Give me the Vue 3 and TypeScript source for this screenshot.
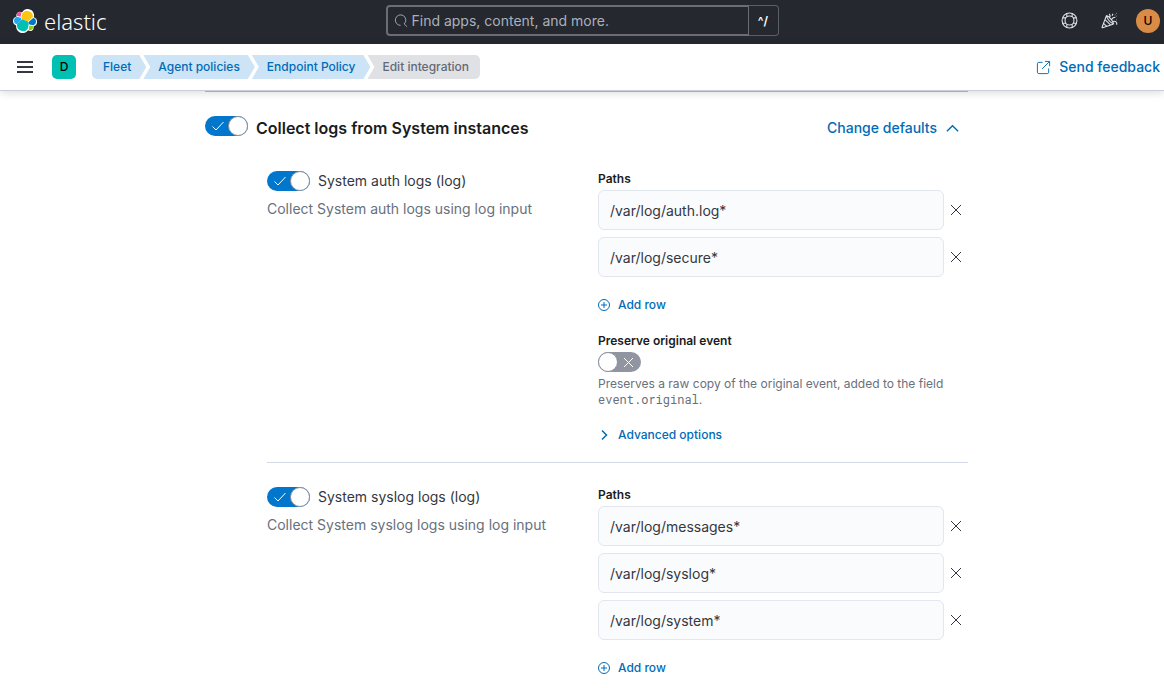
<script setup lang="ts">
import { ref } from 'vue'

interface Stream {
  id: string
  title: string
  description: string
  enabled: boolean
  paths: string[]
  preserve?: boolean
}

const crumbs = ['Fleet', 'Agent policies', 'Endpoint Policy', 'Edit integration']
const query = ref('')
const collectLogs = ref(true)

const streams = ref<Stream[]>([
  {
    id: 'auth',
    title: 'System auth logs (log)',
    description: 'Collect System auth logs using log input',
    enabled: true,
    paths: ['/var/log/auth.log*', '/var/log/secure*'],
    preserve: false,
  },
  {
    id: 'syslog',
    title: 'System syslog logs (log)',
    description: 'Collect System syslog logs using log input',
    enabled: true,
    paths: ['/var/log/messages*', '/var/log/syslog*', '/var/log/system*'],
  },
])

function removePath(stream: Stream, index: number) {
  stream.paths.splice(index, 1)
}

function addPath(stream: Stream) {
  stream.paths.push('')
}
</script>

<template>
  <div class="app">
    <header class="topbar">
      <a class="brand" href="#" aria-label="Elastic home">
        <svg class="brand-mark" viewBox="0 0 32 32" aria-hidden="true">
          <path fill="#fff" d="M32 16.77a6.334 6.334 0 0 0-1.14-3.63 6.269 6.269 0 0 0-3.04-2.26 9.117 9.117 0 0 0-.15-4.99 9.06 9.06 0 0 0-2.92-4.06A8.964 8.964 0 0 0 15.37 1.06 8.978 8.978 0 0 0 11.98 4.64 4.782 4.782 0 0 0 6.4 4.54a4.832 4.832 0 0 0-1.63 5.34A6.38 6.38 0 0 0 0 15.92a6.352 6.352 0 0 0 4.19 5.98 9.037 9.037 0 0 0 12.44 9.46 8.974 8.974 0 0 0 3.44-2.97 4.768 4.768 0 0 0 5.57.11 4.823 4.823 0 0 0 1.65-5.3A6.38 6.38 0 0 0 32 16.77Z" />
          <path fill="#FEC514" d="m12.58 13.79 7 3.21 7.06-6.21a7.85 7.85 0 0 0-14.4-4.72l-1.18 6.12 1.52 1.6Z" />
          <path fill="#00BFB3" d="M5.33 21.22a7.91 7.91 0 0 0 14.53 4.66l1.17-6.09-1.56-3-7.03-3.21-7.11 6.2v1.44Z" />
          <path fill="#F04E98" d="m5.29 9.1 4.8 1.14L11.14 4.77A3.79 3.79 0 0 0 5.29 9.1Z" />
          <path fill="#1BA9F5" d="M4.87 10.24a5.36 5.36 0 0 0-.13 10.1l6.73-6.1-1.24-2.65-5.36-1.35Z" />
          <path fill="#93C90E" d="M20.87 27.39a3.78 3.78 0 0 0 5.84-4.32l-4.8-1.13-1.04 5.45Z" />
          <path fill="#07C" d="m21.85 20.56 5.28 1.24a5.36 5.36 0 0 0 .13-10.1l-6.91 6.07 1.5 2.79Z" />
        </svg>
        <span class="brand-name">elastic</span>
      </a>

      <form class="search" role="search" @submit.prevent>
        <div class="search-box">
          <svg class="search-icon" viewBox="0 0 16 16" aria-hidden="true">
            <path d="M7.500 13A6 6 0 1 1 11.700 11.300M11.300 10.900l3.700 3.700" />
          </svg>
          <input v-model="query" type="text" aria-label="Find apps, content, and more" placeholder="Find apps, content, and more." />
        </div>
        <span class="shortcut">^/</span>
      </form>

      <div class="tools">
        <button class="tool" type="button" aria-label="Help">
          <svg class="help-icon" viewBox="0 0 16 16" aria-hidden="true">
            <circle cx="8" cy="8" r="7" />
            <circle cx="8" cy="8" r="4.200" />
            <path d="M5.500 1.500v3.200M10.500 1.500v3.200M5.500 11.300v3.200M10.500 11.300v3.200M1.500 5.500h3.200M1.500 10.500h3.200M11.300 5.500h3.200M11.300 10.500h3.200" />
          </svg>
        </button>
        <button class="tool" type="button" aria-label="What's new">
          <svg viewBox="0 0 16 16" aria-hidden="true">
            <path d="M5.200 3.200 1 14.300c-.1.400.1.600.5.500l10.500-3.600M5.200 3.200c.3 2.700 3 6.900 6.800 8M5.200 3.200c2.500 1 6.300 5.500 6.800 8M3.800 7.200l5.100 5M2.400 10.800l3 2.700M8 5.200c1-1.200.8-2.200-.3-3.500M10 7c.8-1.500 2-2 3.500-2M11.200 9c1.400-.6 2.900-.2 3.600 1.300v1.700M10.500 3.500l.7-1.800M13 2.600l.4.100M14.600 1.200l.4.100M14.700 3.800l.4.100M14.300 7.200l.4.100" />
          </svg>
        </button>
        <button class="avatar" type="button" aria-label="Account menu">U</button>
      </div>
    </header>

    <div class="subbar">
      <button class="menu" type="button" aria-label="Toggle primary navigation">
        <svg viewBox="0 0 16 12" aria-hidden="true">
          <path d="M0 1h16M0 6h16M0 11h16" />
        </svg>
      </button>
      <button class="space" type="button" aria-label="Default space">D</button>
      <nav class="crumbs" aria-label="Breadcrumbs">
        <template v-for="(crumb, i) in crumbs" :key="crumb">
          <a v-if="i < crumbs.length - 1" class="crumb" href="#">{{ crumb }}</a>
          <span v-else class="crumb current" aria-current="page">{{ crumb }}</span>
        </template>
      </nav>
      <a class="feedback" href="#">
        <svg viewBox="0 0 16 16" aria-hidden="true">
          <path d="M7 2.500H3A1.500 1.500 0 0 0 1.500 4v9A1.500 1.500 0 0 0 3 14.500h9a1.500 1.500 0 0 0 1.500-1.500V9M9.500 1.500h5v5M14.300 1.700 6.500 9.500" />
        </svg>
        Send feedback
      </a>
    </div>

    <main class="content">
      <section class="panel">
        <div class="panel-head">
          <label class="switch-row">
            <span class="switch">
              <input v-model="collectLogs" type="checkbox" role="switch" />
              <svg viewBox="0 0 43 20" aria-hidden="true">
                <rect class="track" width="43" height="20" rx="10" />
                <path class="mark tick" d="m7.500 10.500 3.500 3.500 7.500-8" />
                <path class="mark cross" d="m26 6 9 9m0-9-9 9" />
                <circle class="thumb" cx="10" cy="10" r="9.500" />
              </svg>
            </span>
            <h2>Collect logs from System instances</h2>
          </label>
          <button class="link defaults" type="button">
            Change defaults
            <svg viewBox="0 0 16 16" aria-hidden="true"><path d="m2 11 6-6 6 6" /></svg>
          </button>
        </div>

        <div v-for="stream in streams" :key="stream.id" class="stream">
          <div class="summary">
            <label class="switch-row">
              <span class="switch">
                <input v-model="stream.enabled" type="checkbox" role="switch" />
                <svg viewBox="0 0 43 20" aria-hidden="true">
                  <rect class="track" width="43" height="20" rx="10" />
                  <path class="mark tick" d="m7.500 10.500 3.500 3.500 7.500-8" />
                  <path class="mark cross" d="m26 6 9 9m0-9-9 9" />
                  <circle class="thumb" cx="10" cy="10" r="9.500" />
                </svg>
              </span>
              <span>{{ stream.title }}</span>
            </label>
            <p class="description">{{ stream.description }}</p>
          </div>

          <div class="fields">
            <label class="field-label" :for="`${stream.id}-path-0`">Paths</label>
            <div class="paths">
              <div v-for="(_, i) in stream.paths" :key="i" class="path">
                <input :id="`${stream.id}-path-${i}`" v-model="stream.paths[i]" type="text" :aria-label="`Path ${i + 1}`" />
                <button type="button" aria-label="Remove row" @click="removePath(stream, i)">
                  <svg viewBox="0 0 12 12" aria-hidden="true"><path d="m1 1 10 10m0-10L1 11" /></svg>
                </button>
              </div>
            </div>
            <button class="link small" type="button" @click="addPath(stream)">
              <svg viewBox="0 0 12 12" aria-hidden="true">
                <circle cx="6" cy="6" r="5.500" />
                <path d="M6 3v6M3 6h6" />
              </svg>
              Add row
            </button>

            <template v-if="stream.preserve !== undefined">
              <label class="field-label preserve" :for="`${stream.id}-preserve`">Preserve original event</label>
              <span class="switch">
                <input :id="`${stream.id}-preserve`" v-model="stream.preserve" type="checkbox" role="switch" />
                <svg viewBox="0 0 43 20" aria-hidden="true">
                  <rect class="track" width="43" height="20" rx="10" />
                  <path class="mark tick" d="m7.500 10.500 3.500 3.500 7.500-8" />
                  <path class="mark cross" d="m26 6 9 9m0-9-9 9" />
                  <circle class="thumb" cx="10" cy="10" r="9.500" />
                </svg>
              </span>
              <p class="help">
                Preserves a raw copy of the original event, added to the field
                <code>event.original</code>.
              </p>
              <button class="link small advanced" type="button">
                <svg viewBox="0 0 12 12" aria-hidden="true"><path d="m4 1.500 4.500 4.500L4 10.500" /></svg>
                Advanced options
              </button>
            </template>
          </div>
        </div>
      </section>
    </main>
  </div>
</template>

<style>
html,
body {
  height: 100%;
  overflow: hidden;
}

#app {
  height: 100%;
}
</style>

<style scoped>
.app {
  height: 100%;
  display: flex;
  flex-direction: column;
  background: #fff;
  color: #343741;
  font-family: Inter, "Liberation Sans", sans-serif;
  font-size: 14px;
  line-height: 20px;
}

button,
input {
  font: inherit;
  color: inherit;
}

button {
  margin: 0;
  padding: 0;
  border: 0;
  background: none;
  cursor: pointer;
}

a {
  color: #006bb8;
  text-decoration: none;
}

svg {
  display: block;
  flex: none;
  fill: none;
  stroke: currentColor;
}

h2,
p {
  margin: 0;
}

.topbar {
  flex: none;
  height: 44px;
  display: grid;
  grid-template-columns: 1fr 393px 1fr;
  align-items: center;
  box-sizing: border-box;
  padding: 0 4px 3px;
  background: #25282f;
  color: #dfe5ef;
}

.brand {
  display: flex;
  align-items: center;
  gap: 7px;
  padding-left: 9px;
  color: #fff;
}

.brand-mark {
  width: 24px;
  height: 24px;
  stroke: none;
}

.brand-name {
  font-family: "Noto Sans", "Open Sans", sans-serif;
  font-size: 22px;
  font-weight: 300;
  line-height: 24px;
}

.search {
  display: flex;
  height: 31px;
  box-sizing: border-box;
  color: #abb4c4;
}

.search-box {
  flex: 1;
  display: flex;
  align-items: center;
  gap: 4px;
  padding: 0 6px;
  border: 2px solid #6a6d75;
  border-right-width: 1px;
  border-radius: 4px 0 0 4px;
}

.search-icon {
  width: 14px;
  height: 14px;
}

.search input {
  flex: 1;
  min-width: 0;
  padding: 0;
  border: 0;
  outline: 0;
  background: none;
}

.search input::placeholder {
  color: #abb0ba;
  opacity: 1;
}

.shortcut {
  width: 29px;
  display: grid;
  place-items: center;
  border: 1px solid #5b5e66;
  border-left: 0;
  border-radius: 0 4px 4px 0;
  color: #fff;
  font-size: 12px;
  font-weight: 600;
}

.tools {
  display: flex;
  align-items: center;
  justify-content: flex-end;
  gap: 23px;
}

.tool svg {
  width: 17px;
  height: 17px;
}

.avatar {
  width: 24px;
  height: 24px;
  border-radius: 50%;
  background: #da8b45;
  color: #000;
  font-size: 12px;
  font-weight: 500;
}

.tools .avatar {
  margin-left: -5px;
}

.subbar {
  flex: none;
  position: relative;
  z-index: 1;
  display: flex;
  align-items: center;
  height: 46px;
  padding: 0 4px 0 17px;
  border-bottom: 1px solid #c9cede;
  background: #fff;
  box-shadow: 0 2px 8px rgba(0, 0, 0, 0.14);
}

.menu svg {
  width: 16px;
  height: 12px;
  stroke-width: 2;
}

.space {
  width: 24px;
  height: 24px;
  margin: 0 16px 0 19px;
  border-radius: 5px;
  background: #00bfb3;
  color: #000;
  font-size: 12px;
  font-weight: 500;
}

.crumbs {
  display: flex;
  font-size: 12px;
  font-weight: 500;
  line-height: 24px;
}

.crumb {
  margin-left: -3px;
  padding: 0 15px;
  background: #cce4f5;
  clip-path: polygon(0 0, calc(100% - 7px) 0, 100% 50%, calc(100% - 7px) 100%, 0 100%, 7px 50%);
}

.crumb:first-child {
  margin-left: 0;
  padding-left: 11px;
  border-radius: 5px 0 0 5px;
  clip-path: polygon(0 0, calc(100% - 7px) 0, 100% 50%, calc(100% - 7px) 100%, 0 100%);
}

.crumb.current {
  padding-right: 11px;
  border-radius: 0 5px 5px 0;
  background: #e0e1e4;
  color: #646a77;
  clip-path: polygon(0 0, 100% 0, 100% 100%, 0 100%, 7px 50%);
}

.feedback {
  display: flex;
  align-items: center;
  gap: 8px;
  margin-left: auto;
  font-weight: 500;
}

.feedback svg {
  width: 15px;
  height: 15px;
}

.content {
  flex: 1;
  min-height: 0;
  overflow: hidden;
  padding-left: 9px;
}

.panel {
  max-width: 763px;
  margin: 0 auto;
  border-top: 1px solid #b7bfcf;
}

.panel-head {
  display: flex;
  align-items: center;
  justify-content: space-between;
  padding: 24px 8px 31px 0;
}

.switch-row {
  display: flex;
  align-items: center;
  gap: 8px;
}

.panel-head .switch-row {
  align-items: flex-start;
}

h2 {
  color: #1a1c21;
  font-size: 16px;
  font-weight: 600;
  line-height: 24px;
}

.switch {
  position: relative;
  display: block;
  flex: none;
  width: 43px;
  height: 20px;
}

.switch input {
  position: absolute;
  inset: 0;
  width: 100%;
  height: 100%;
  margin: 0;
  opacity: 0;
  cursor: pointer;
}

.switch svg {
  width: 43px;
  height: 20px;
}

.track {
  fill: #9195a1;
  stroke: none;
}

.mark {
  stroke: #fff;
}

.tick {
  display: none;
}

.thumb {
  fill: #fff;
  stroke: #8c919c;
}

.switch input:checked + svg .track {
  fill: #0077cc;
}

.switch input:checked + svg .tick {
  display: inline;
}

.switch input:checked + svg .cross {
  display: none;
}

.switch input:checked + svg .thumb {
  transform: translateX(23px);
}

.link {
  display: flex;
  align-items: center;
  gap: 8px;
  color: #006bb8;
  font-weight: 500;
}

.link svg {
  width: 15px;
  height: 15px;
  stroke-width: 1.5;
}

.link.small {
  font-size: 12px;
  line-height: 16px;
}

.link.small svg {
  width: 12px;
  height: 12px;
  stroke-width: 1;
}

.link.advanced svg {
  stroke-width: 1.5;
}

.stream {
  display: grid;
  grid-template-columns: 331fr 370fr;
  margin-left: 62px;
  padding-bottom: 19px;
}

.stream + .stream {
  padding-top: 24px;
  border-top: 1px solid #d3dae6;
}

.description {
  margin-top: 8px;
  color: #69707d;
}

.field-label {
  display: block;
  color: #1a1c21;
  font-size: 12px;
  font-weight: 600;
  line-height: 16px;
}

.paths {
  display: grid;
  gap: 7px;
  margin: 3px 0 20px;
}

.path {
  display: flex;
}

.path input {
  flex: 1;
  min-width: 0;
  height: 40px;
  box-sizing: border-box;
  padding: 1px 11px 0;
  border: 1px solid #e2e6ee;
  border-radius: 6px;
  outline: 0;
  background: #fafbfd;
}

.path button {
  width: 24px;
  display: grid;
  place-items: center;
}

.path svg {
  width: 12px;
  height: 12px;
}

.preserve {
  margin: 20px 0 3px;
}

.help {
  margin-top: 4px;
  color: #69707d;
  font-size: 12px;
  line-height: 16px;
}

code {
  font-family: "Roboto Mono", "DejaVu Sans Mono", monospace;
  line-height: 12px;
}

.advanced {
  margin-top: 19px;
}
</style>
